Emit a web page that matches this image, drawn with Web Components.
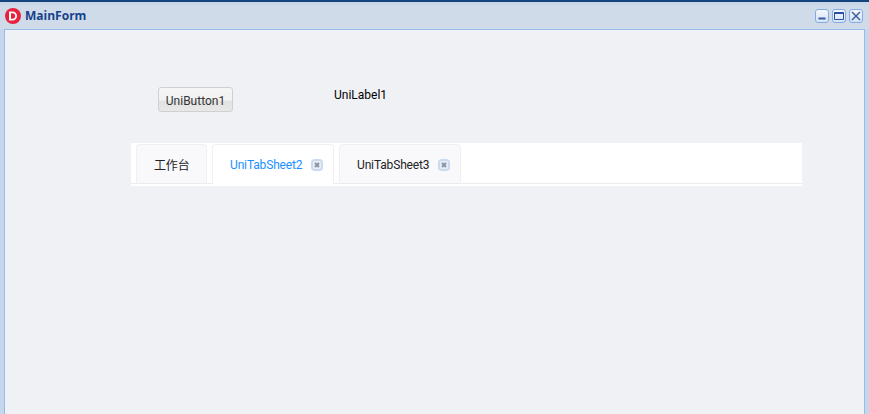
<!DOCTYPE html>
<html>
<head>
<meta charset="utf-8">
<title>MainForm</title>
<style>
  html, body { margin: 0; height: 100%; overflow: hidden; }
</style>
</head>
<body>
<main-form caption="MainForm">
  <form-row>
    <uni-button>UniButton1</uni-button>
    <uni-label>UniLabel1</uni-label>
  </form-row>
  <tab-strip>
    <tab-item>工作台</tab-item>
    <tab-item active closable>UniTabSheet2</tab-item>
    <tab-item closable>UniTabSheet3</tab-item>
  </tab-strip>
</main-form>

<script>
class MainForm extends HTMLElement {
  constructor() {
    super();
    this.attachShadow({ mode: 'open' });
    this.shadowRoot.innerHTML = `
      <style>
        :host {
          display: flex;
          flex-direction: column;
          height: 414px;
          box-sizing: border-box;
          background: #c6d6ec;
          border-top: 2px solid #15437c;
          font-family: Roboto, "Noto Sans CJK SC", sans-serif;
        }
        .bar {
          height: 27px;
          flex: none;
          display: flex;
          align-items: center;
          padding: 0 6px 0 5px;
          gap: 4px;
          background: linear-gradient(#c4d3e6, #cfdbe9 4px);
        }
        .logo { margin-top: 1px; }
        .caption {
          flex: 1;
          font: bold 12px "Open Sans", sans-serif;
          color: #15428b;
        }
        .tools { display: flex; gap: 3px; margin-top: 1px; }
        .tool {
          width: 12px;
          height: 12px;
          background: linear-gradient(#f3f7fc, #d5e3f4);
          border: 1px solid #86abe0;
          border-radius: 3px;
          display: block;
        }
        .body {
          flex: 1;
          margin: 0 4px;
          background: #f0f1f5;
          border: 1px solid #99bbe8;
          border-bottom: 0;
          padding: 57px 62px 0 126px;
        }
      </style>
      <div class="bar">
        <svg class="logo" width="16" height="16" viewBox="0 0 16 16">
          <circle cx="8" cy="8" r="8" fill="#e8213f"/>
          <path d="M4 3.5h3.5a4.5 4.5 0 0 1 0 9H4z M6 5.3v5.4h1.5a2.7 2.7 0 0 0 0-5.4z" fill="#fff" fill-rule="evenodd"/>
        </svg>
        <span class="caption">${this.getAttribute('caption')}</span>
        <div class="tools">
          <svg class="tool" viewBox="0 0 12 12"><path d="M2.5 7.5h7v2h-7z" fill="#3a5aa8"/></svg>
          <svg class="tool" viewBox="0 0 12 12"><path d="M1.5 2.5h9v7h-9z" fill="none" stroke="#2d4f9e"/><path d="M1.5 2h9v2h-9z" fill="#2d4f9e"/></svg>
          <svg class="tool" viewBox="0 0 12 12"><path d="M2 2l8 8M10 2l-8 8" fill="none" stroke="#3f5f9e" stroke-width="1.5"/></svg>
        </div>
      </div>
      <div class="body"><slot></slot></div>
    `;
  }
}

class FormRow extends HTMLElement {
  constructor() {
    super();
    this.attachShadow({ mode: 'open' });
    this.shadowRoot.innerHTML = `
      <style>
        :host { display: flex; align-items: flex-start; padding-left: 27px; height: 56px; }
      </style>
      <slot></slot>
    `;
  }
}

class UniButton extends HTMLElement {
  constructor() {
    super();
    this.attachShadow({ mode: 'open' });
    this.shadowRoot.innerHTML = `
      <style>
        :host {
          display: block;
          box-sizing: border-box;
          width: 75px;
          height: 25px;
          padding-top: 1px;
          line-height: 24px;
          text-align: center;
          font-size: 12px;
          color: #333;
          border: 1px solid #d0d0d0;
          border-radius: 3px;
          background: linear-gradient(#f5f5f5 0, #f2f2f2 50%, #e2e2e2 60%, #e8e8e8 100%);
        }
      </style>
      <slot></slot>
    `;
  }
}

class UniLabel extends HTMLElement {
  constructor() {
    super();
    this.attachShadow({ mode: 'open' });
    this.shadowRoot.innerHTML = `
      <style>
        :host { display: block; margin-left: 101px; font-size: 12px; line-height: 16px; color: #000; }
      </style>
      <slot></slot>
    `;
  }
}

class TabStrip extends HTMLElement {
  constructor() {
    super();
    this.attachShadow({ mode: 'open' });
    this.shadowRoot.innerHTML = `
      <style>
        :host {
          display: flex;
          gap: 5px;
          box-sizing: border-box;
          height: 43px;
          padding: 1px 0 0 5px;
          background: linear-gradient(#fff 40px, #ebebef 40px, #ebebef 41px, #fff 41px);
        }
      </style>
      <slot></slot>
    `;
  }
}

class TabItem extends HTMLElement {
  constructor() {
    super();
    this.attachShadow({ mode: 'open' });
    const closable = this.hasAttribute('closable');
    this.shadowRoot.innerHTML = `
      <style>
        :host {
          display: flex;
          align-items: center;
          box-sizing: border-box;
          width: ${closable ? 122 : 71}px;
          height: 40px;
          padding: 0 10px 0 17px;
          border: 1px solid #f0f0f3;
          border-bottom: 0;
          border-radius: 4px 4px 0 0;
          background: linear-gradient(#f9f9fb 38px, #ebebef 38px);
          font-size: 12px;
          letter-spacing: -0.15px;
          color: #222;
        }
        :host([active]) { background: #fff; color: #1890ff; }
        span { flex: 1; white-space: nowrap; }
        svg { margin-left: 4px; flex: none; }
      </style>
      <span><slot></slot></span>
      ${closable ? `<svg width="12" height="12" viewBox="0 0 12 12">
        <rect x="0" y="0" width="12" height="12" rx="4" fill="#c9daf2"/>
        <rect x="2" y="2" width="8" height="8" rx="1.5" fill="#e9edf4"/>
        <path d="M4 4l4 4M8 4l-4 4" stroke="#8a94a8" stroke-width="2"/>
      </svg>` : ''}
    `;
  }
}

customElements.define('main-form', MainForm);
customElements.define('form-row', FormRow);
customElements.define('uni-button', UniButton);
customElements.define('uni-label', UniLabel);
customElements.define('tab-strip', TabStrip);
customElements.define('tab-item', TabItem);
</script>
</body>
</html>
